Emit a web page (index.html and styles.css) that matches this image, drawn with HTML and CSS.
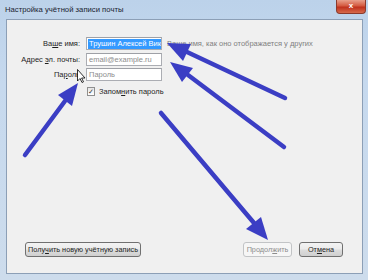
FILE: index.html
```html
<!DOCTYPE html>
<html lang="ru">
<head>
    <meta charset="UTF-8">
    <title>Настройка учётной записи почты</title>
    <link rel="stylesheet" href="styles.css">
</head>
<body>
    <div class="window">
        <div class="titlebar">
            <span class="title">Настройка учётной записи почты</span>
            <span class="close">x</span>
        </div>
        <div class="client">
            <div class="form">
                <label class="caption">Ва<u>ш</u>е имя:</label>
                <div class="field"><span class="selected">Трушин Алексей Викт</span></div>
                <span class="hint">Ваше имя, как оно отображается у других</span>

                <label class="caption">Адрес <u>э</u>л. почты:</label>
                <div class="field empty">email@example.ru</div>
                <span></span>

                <label class="caption">Па<u>р</u>оль</label>
                <div class="field empty">Пароль</div>
                <span></span>

                <span></span>
                <label class="remember"><span class="check">✓</span><span>Запом<u>н</u>ить пароль</span></label>
                <span></span>
            </div>

            <div class="buttons">
                <button class="btn wide">Полу<u>ч</u>ить новую учётную запись</button>
                <span class="grow"></span>
                <button class="btn disabled">Продол<u>ж</u>ить</button>
                <button class="btn">От<u>м</u>ена</button>
            </div>
        </div>

        <svg class="arrows" viewBox="0 0 368 280" width="368" height="280">
            <g stroke="#3b3ec4" stroke-width="4.5" stroke-linecap="round" fill="none">
                <line x1="285" y1="98" x2="187" y2="52"/>
                <line x1="284" y1="147" x2="188" y2="75"/>
                <line x1="25" y1="155" x2="65" y2="101"/>
                <line x1="161" y1="113" x2="254" y2="223"/>
            </g>
            <g fill="#3b3ec4">
                <polygon points="167,43 191,44 183,61"/>
                <polygon points="170,62 193,68 182,82"/>
                <polygon points="78,83 72,106 58,95"/>
                <polygon points="268,240 246,229 261,217"/>
            </g>
            <polygon class="cursor" points="77.5,69.5 77.5,81 80,78.5 82,82.5 83.5,81.8 81.6,78 85,78"/>
        </svg>
    </div>
</body>
</html>
```

FILE: styles.css
```css
body {
    margin: 0;
    font-family: "Liberation Sans", Arial, sans-serif;
    font-size: 7.5px;
    color: #1e1e1e;
}
.window {
    position: relative;
    width: 368px;
    height: 280px;
    box-sizing: border-box;
    padding: 0 5px 6px 6px;
    display: flex;
    flex-direction: column;
    background: linear-gradient(180deg, #bcd2ea 0%, #c6d9ee 30%, #cddcec 100%);
}
.titlebar {
    height: 19px;
    display: flex;
    align-items: flex-start;
    justify-content: space-between;
}
.title {
    margin: 5px 0 0 -1px;
    font-size: 7.7px;
    color: #1b2430;
}
.close {
    width: 28px;
    height: 13px;
    margin-right: -3px;
    line-height: 12px;
    text-align: center;
    color: #fff;
    font-weight: bold;
    font-size: 8px;
    border: 1px solid #8b3a2c;
    border-top: none;
    border-radius: 0 0 4px 4px;
    background: linear-gradient(180deg, #e8a08c 0%, #d45a40 45%, #c0321d 55%, #d66a4c 100%);
}
.client {
    flex: 1;
    display: flex;
    flex-direction: column;
    background: #f0f0f0;
    border: 1px solid #8c9fb6;
}
.form {
    display: grid;
    grid-template-columns: 73px 76px 1fr;
    grid-auto-rows: 13px;
    column-gap: 6px;
    row-gap: 2.5px;
    padding-top: 17px;
    align-items: center;
}
.caption {
    text-align: right;
    white-space: nowrap;
}
.field {
    height: 13px;
    box-sizing: border-box;
    border: 1px solid #abadb3;
    border-top-color: #9ea0a6;
    background: #fff;
    padding: 1px 1px;
    overflow: hidden;
    white-space: nowrap;
    line-height: 10px;
}
.field.empty {
    color: #8d8d8d;
    padding-left: 2px;
}
.selected {
    display: inline-block;
    background: #3399ff;
    color: #fff;
    padding: 0 1px;
    line-height: 10px;
}
.hint {
    color: #7f7f7f;
    white-space: nowrap;
    margin-left: -1px;
}
.remember {
    display: flex;
    align-items: center;
    gap: 4px;
    white-space: nowrap;
    margin-top: 2px;
    padding-left: 1px;
}
.check {
    width: 7px;
    height: 7px;
    border: 1px solid #8f8f8f;
    background: linear-gradient(180deg, #e6e6e6, #ffffff);
    font-size: 7px;
    line-height: 7px;
    text-align: center;
    color: #333;
}
.buttons {
    margin-top: auto;
    display: flex;
    gap: 7px;
    padding: 0 19px 16px 18px;
}
.grow {
    flex: 1;
}
.btn {
    height: 15px;
    padding: 0 2px;
    font-family: inherit;
    font-size: 7.3px;
    white-space: nowrap;
    color: #1e1e1e;
    border: 1px solid #707070;
    border-radius: 3px;
    background: linear-gradient(180deg, #f3f3f3 0%, #ebebeb 48%, #dddddd 52%, #cfcfcf 100%);
}
.btn.wide {
    width: 116px;
}
.btn.disabled {
    width: 49px;
    color: #8d8d8d;
    border-color: #c2c4c6;
    background: #f6f6f6;
}
.btn:last-child {
    width: 44px;
}
.arrows {
    position: absolute;
    left: 0;
    top: 0;
    pointer-events: none;
}
.cursor {
    fill: #fff;
    stroke: #000;
    stroke-width: 0.8;
}
```
